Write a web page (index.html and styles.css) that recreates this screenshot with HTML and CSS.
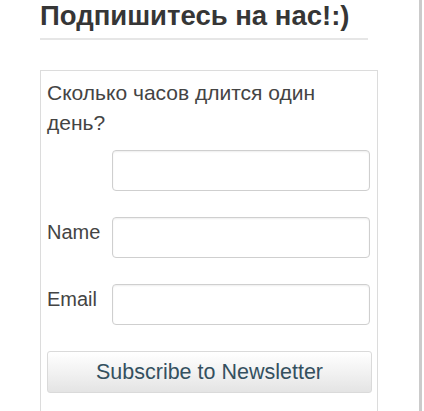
FILE: index.html
```html
<!DOCTYPE html>
<html lang="ru">
<head>
  <meta charset="UTF-8">
  <meta name="viewport" content="width=device-width, initial-scale=1.0">
  <title>Подпишитесь</title>
  <link rel="stylesheet" href="styles.css">
</head>
<body>
  <div class="page">
    <div class="sidebar">
      <h2 class="widget-title">Подпишитесь на нас!:)</h2>
      <form class="subscribe-box" action="#" method="POST">
        <p class="question">Сколько часов длится один день?</p>
        <div class="form-row">
          <span class="form-label"></span>
          <input type="text" class="form-input" name="answer">
        </div>
        <div class="form-row">
          <label class="form-label" for="name">Name</label>
          <input type="text" class="form-input" name="name" id="name">
        </div>
        <div class="form-row">
          <label class="form-label" for="email">Email</label>
          <input type="text" class="form-input" name="email" id="email">
        </div>
        <button type="submit" class="subscribe-button">Subscribe to Newsletter</button>
      </form>
    </div>
  </div>
</body>
</html>
```

FILE: styles.css
```css
/* общий фон страницы */
body {
  margin: 0;
  background-color: white;
  font-family: "Liberation Sans", Arial, sans-serif;
  color: #444;
  overflow: hidden;
}

/* страница с серой линией справа */
.page {
  width: 419px;
  height: 411px;
  overflow: hidden;
  border-right: 3px solid #cbcbcb;
}

.sidebar {
  padding-left: 40px;
  width: 338px;
}

/* заголовок виджета */
.widget-title {
  margin: 0;
  width: 328px;
  height: 38px;
  font-size: 27.5px;
  line-height: 32px;
  font-weight: bold;
  color: #363636;
  border-bottom: 2px solid #e6e6e6;
}

/* рамка формы */
.subscribe-box {
  margin-top: 30px;
  border: 1px solid #dcdcdc;
  border-bottom: none;
  padding: 7px 6px 0 6px;
  height: 400px;
}

.question {
  margin: 0 0 12px 0;
  font-size: 21px;
  line-height: 30px;
  color: #444;
}

.form-row {
  display: flex;
  margin-bottom: 26px;
}

.form-label {
  width: 65px;
  flex-shrink: 0;
  font-size: 20px;
  line-height: 30px;
  color: #444;
}

.form-input {
  width: 258px;
  height: 41px;
  box-sizing: border-box;
  border: 1px solid #cfcfcf;
  border-radius: 4px;
  box-shadow: inset 0 1px 2px #eee;
  background: white;
}

/* кнопка подписки */
.subscribe-button {
  display: block;
  width: 325px;
  height: 42px;
  border: 1px solid #dadada;
  border-radius: 3px;
  background: linear-gradient(to bottom, #ffffff, #f2f2f2 50%, #e4e4e4);
  font-family: "Liberation Sans", Arial, sans-serif;
  font-size: 21.5px;
  color: #34505f;
  padding: 0;
}
```
